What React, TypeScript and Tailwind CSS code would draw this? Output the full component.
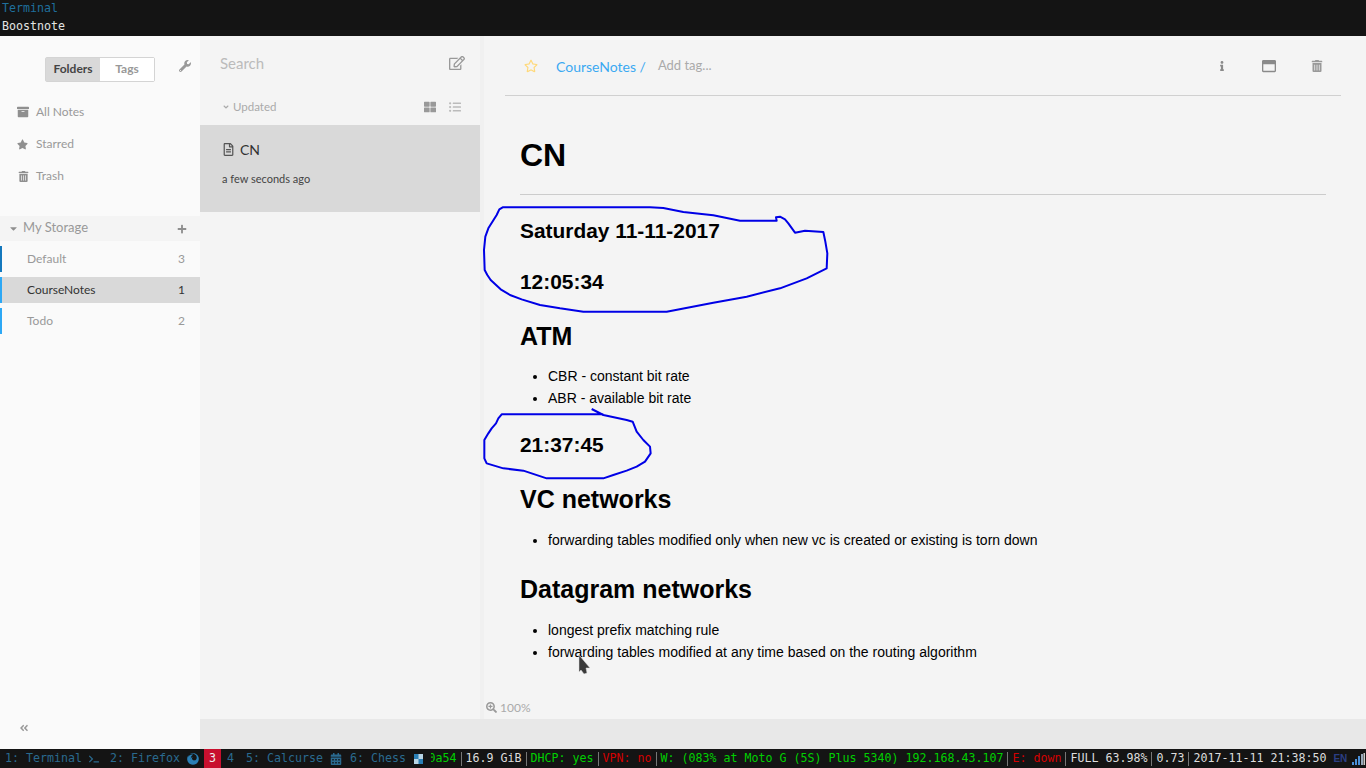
import {
  FaAngleDoubleLeft,
  FaAngleDown,
  FaArchive,
  FaCalendarAlt,
  FaCaretDown,
  FaFirefox,
  FaInfo,
  FaListUl,
  FaPlus,
  FaRegEdit,
  FaRegFileAlt,
  FaRegStar,
  FaRegWindowMaximize,
  FaSearchPlus,
  FaStar,
  FaTerminal,
  FaThLarge,
  FaTrashAlt,
  FaWrench,
} from "react-icons/fa";

const mono = "font-['DejaVu_Sans_Mono',monospace] text-[11.63px] leading-[19px] whitespace-pre";

function Sep() {
  return <span className="mx-[4px] h-[14px] w-px bg-[#777]" />;
}

function NavRow({ icon, label }: { icon: React.ReactNode; label: string }) {
  return (
    <div className="flex h-8 items-center pl-[17px] text-[12px] text-[#999]">
      <span className="flex w-[19px] items-center text-[#8f8f8f]">{icon}</span>
      <span className="-mt-[1px]">{label}</span>
    </div>
  );
}

function FolderRow({ name, count, bar, active }: { name: string; count: number; bar: string; active?: boolean }) {
  return (
    <div className={`flex h-[26px] items-center justify-between pr-[15px] text-[12px] ${active ? "bg-[#d9d9d9] text-[#333]" : "text-[#999]"}`}>
      <div className="flex h-full items-center">
        <span className={`h-full w-[2px] ${bar}`} />
        <span className="ml-[25px]">{name}</span>
      </div>
      <span>{count}</span>
    </div>
  );
}

function Sidebar() {
  return (
    <aside className="flex h-full w-[200px] shrink-0 flex-col bg-[#fafafa]">
      <div className="flex h-[60px] shrink-0 items-center pl-[45px] pt-[6px]">
        <div className="flex h-[25px] w-[110px] rounded-[2px] border border-[#d4d4d4] text-[12px]">
          <div className="flex w-[54px] items-center justify-center bg-[#d9d9d9] font-bold text-[#444]">Folders</div>
          <div className="flex flex-1 items-center justify-center bg-white font-bold text-[#999]">Tags</div>
        </div>
        <FaWrench className="ml-[24px] -mt-[6px] text-[12px] text-[#999]" />
      </div>
      <nav className="flex flex-col">
        <NavRow icon={<FaArchive className="text-[12px]" />} label="All Notes" />
        <NavRow icon={<FaStar className="text-[11px]" />} label="Starred" />
        <NavRow icon={<FaTrashAlt className="ml-[1px] text-[11px]" />} label="Trash" />
      </nav>
      <div className="mt-6 flex h-[25px] items-center justify-between bg-[#f4f4f4] pl-[8px] pr-[13px] text-[13px] text-[#999]">
        <div className="flex items-center">
          <FaCaretDown className="text-[11px] text-[#8f8f8f]" />
          <span className="ml-[4px] -mt-[2px]">My Storage</span>
        </div>
        <FaPlus className="text-[10px] text-[#8f8f8f]" />
      </div>
      <div className="mt-[5px] flex flex-col gap-[5px]">
        <FolderRow name="Default" count={3} bar="bg-[#1478bd]" />
        <FolderRow name="CourseNotes" count={1} bar="bg-[#2da8f5]" active />
        <FolderRow name="Todo" count={2} bar="bg-[#2da8f5]" />
      </div>
      <div className="mt-auto pb-[16px] pl-[19px]">
        <FaAngleDoubleLeft className="text-[10px] text-[#999]" />
      </div>
    </aside>
  );
}

function NoteList() {
  return (
    <section className="flex w-[280px] shrink-0 flex-col bg-[#f4f4f4]">
      <div className="flex h-[54px] items-center justify-between pl-5 pr-[15px]">
        <span className="text-[15px] text-[#bbb]">Search</span>
        <FaRegEdit className="text-[16px] text-[#999]" />
      </div>
      <div className="flex h-[35px] items-center justify-between pb-[2px] pl-[22px] pr-[19px] text-[11.5px] text-[#aaa]">
        <div className="flex items-center gap-[3px]">
          <FaAngleDown className="text-[8px]" />
          Updated
        </div>
        <div className="flex items-center gap-[13px]">
          <FaThLarge className="text-[12px] text-[#999]" />
          <FaListUl className="text-[12px] text-[#bbb]" />
        </div>
      </div>
      <div className="h-[87px] bg-[#d9d9d9] pl-[22px] pt-[14px]">
        <div className="flex h-[20px] items-center text-[14px] text-[#333]">
          <FaRegFileAlt className="mr-[5px] text-[13px] text-[#555]" />
          CN
        </div>
        <div className="mt-[12px] text-[11px] text-[#444]">a few seconds ago</div>
      </div>
    </section>
  );
}

function NoteHeader() {
  return (
    <header className="ml-[21px] mr-[25px] flex h-[60px] shrink-0 items-center justify-between border-b border-[#d0d0d0]">
      <div className="flex items-center pl-[19px]">
        <FaRegStar className="text-[14px] text-[#ffd97a]" />
        <span className="ml-[18px] pt-[2px] text-[14px] text-[#3ba9f2]">CourseNotes /</span>
        <span className="ml-[12px] text-[13px] text-[#aaa]">Add tag...</span>
      </div>
      <div className="flex items-center pr-[18px] text-[#8a8a8a]">
        <FaInfo className="text-[10px]" />
        <FaRegWindowMaximize className="ml-[35px] text-[14px]" />
        <FaTrashAlt className="ml-[35px] text-[12px] text-[#999]" />
      </div>
    </header>
  );
}

function NoteBody() {
  return (
    <article className="ml-[36px] mr-[40px] min-h-0 flex-1 font-['Liberation_Sans',Arial,sans-serif] text-black">
      <h1 className="mt-[39px] text-[32px] font-bold leading-[40px]">CN</h1>
      <hr className="mt-[19px] border-[#ccc]" />
      <h3 className="mt-6 text-[20.9px] font-bold leading-6">Saturday 11-11-2017</h3>
      <h3 className="mt-[27px] text-[20.9px] font-bold leading-6">12:05:34</h3>
      <h2 className="mt-[27px] text-[25px] font-bold leading-[30px]">ATM</h2>
      <ul className="mt-[14px] list-disc pl-7 text-[14px] leading-[22px]">
        <li>CBR - constant bit rate</li>
        <li>ABR - available bit rate</li>
      </ul>
      <h3 className="mt-6 text-[20.9px] font-bold leading-6">21:37:45</h3>
      <h2 className="mt-[27px] text-[25px] font-bold leading-[30px]">VC networks</h2>
      <ul className="mt-[15px] list-disc pl-7 text-[14px] leading-[22px]">
        <li>forwarding tables modified only when new vc is created or existing is torn down</li>
      </ul>
      <h2 className="mt-[23px] text-[25px] font-bold leading-[30px]">Datagram networks</h2>
      <ul className="mt-[15px] list-disc pl-7 text-[14px] leading-[22px]">
        <li>longest prefix matching rule</li>
        <li>forwarding tables modified at any time based on the routing algorithm</li>
      </ul>
    </article>
  );
}

function StatusBar() {
  return (
    <footer className={`flex h-[19px] shrink-0 items-center bg-[#141414] text-[#2a6a8f] ${mono}`}>
      <span className="ml-[5px]">1: Terminal</span>
      <FaTerminal className="ml-[7px] text-[10px]" />
      <span className="ml-[11px]">2: Firefox</span>
      <FaFirefox className="ml-[7px] text-[12px] text-[#2a7fb5]" />
      <span className="ml-[5px] flex h-full w-[17px] items-center justify-center bg-[#c8102e] text-[#eee]">3</span>
      <span className="ml-[6px]">4</span>
      <span className="ml-[12px]">5: Calcurse</span>
      <FaCalendarAlt className="ml-[7px] text-[12px]" />
      <span className="ml-[8px]">6: Chess</span>
      <svg className="ml-[7.5px]" width="9" height="10" viewBox="0 0 9 10">
        <rect width="9" height="10" fill="#2a7fb5" />
        <rect x="4.5" width="4.5" height="5" fill="#b8d4e4" />
        <rect y="5" width="4.5" height="5" fill="#b8d4e4" />
      </svg>
      <span className="ml-[8px] flex w-[26px] justify-end overflow-hidden text-[#00d000]">
        <span className="shrink-0">0a54</span>
      </span>
      <Sep />
      <span className="text-[#ddd]">16.9 GiB</span>
      <Sep />
      <span className="text-[#00d000]">DHCP: yes</span>
      <Sep />
      <span className="text-[#d40000]">VPN: no</span>
      <Sep />
      <span className="text-[#00d000]">W: (083% at Moto G (5S) Plus 5340) 192.168.43.107</span>
      <Sep />
      <span className="text-[#d40000]">E: down</span>
      <Sep />
      <span className="text-[#ddd]">FULL 63.98%</span>
      <Sep />
      <span className="text-[#ddd]">0.73</span>
      <Sep />
      <span className="text-[#ddd]">2017-11-11 21:38:50</span>
      <span className="ml-[7px] font-['Liberation_Sans',sans-serif] text-[10px] font-bold text-[#2b3f85]">EN</span>
      <svg className="ml-[5px]" width="13" height="12" viewBox="0 0 13 12">
        <rect x="0" y="9" width="2" height="3" fill="#4a90d9" />
        <rect x="3" y="6" width="2" height="6" fill="#4a90d9" />
        <rect x="6" y="3" width="2" height="9" fill="#4a90d9" />
        <rect x="9" y="1" width="2" height="11" fill="#9ab" />
        <rect x="11.5" y="0" width="1.5" height="12" fill="#ccc" />
      </svg>
    </footer>
  );
}

export default function App() {
  return (
    <div className="relative flex h-[768px] w-[1366px] flex-col overflow-hidden font-['Lato',sans-serif]">
      <div className={`h-9 shrink-0 bg-[#141414] pl-[2px] ${mono}`}>
        <div className="h-[18px] leading-[17px] text-[#1f6f9c]">Terminal</div>
        <div className="h-[18px] leading-[17px] text-[#e4e4e4]">Boostnote</div>
      </div>

      <main className="flex min-h-0 flex-1">
        <Sidebar />
        <div className="flex min-w-0 flex-1 flex-col bg-[#e8e8e8]">
          <div className="flex h-[683px] shrink-0">
            <NoteList />
            <div className="flex flex-1 flex-col border-l-4 border-[#f0f0f0] bg-[#f4f4f4]">
              <NoteHeader />
              <NoteBody />
              <div className="flex h-[23px] shrink-0 items-center gap-[3px] pl-[2px] text-[12px] text-[#aaa]">
                <FaSearchPlus className="text-[11px] text-[#999]" />
                100%
              </div>
            </div>
          </div>
        </div>
      </main>

      <StatusBar />

      {/* pen marks drawn over the note */}
      <svg className="pointer-events-none absolute left-[480px] top-[200px]" width="360" height="120" viewBox="0 0 1080 360" fill="none" stroke="#0000e6" strokeWidth="6" strokeLinejoin="round">
        <path d="M68 22 L510 22 L550 24 L610 36 L700 46 L780 62 L890 62 L888 52 L900 50 L915 58 L925 70 L945 98 L975 92 L1030 96 L1036 125 L1042 160 L1040 205 L980 235 L900 265 L800 290 L700 308 L560 335 L310 335 L240 325 L180 315 L125 298 L90 285 L62 268 L32 240 L22 225 L14 210 L12 150 L16 110 L25 85 L50 45 L58 28 Z" />
      </svg>
      <svg className="pointer-events-none absolute left-[480px] top-[400px]" width="200" height="90" viewBox="0 0 600 270" fill="none" stroke="#0000e6" strokeWidth="6" strokeLinejoin="round">
        <path d="M335 27 L370 45 L440 60 L458 65 L470 95 L490 120 L510 140 L512 160 L495 185 L470 200 L440 212 L400 225 L370 235 L200 235 L130 212 L70 205 L20 190 L13 175 L13 120 L25 100 L35 85 L48 70 L55 55 L65 43 L370 43" />
      </svg>
      <svg className="pointer-events-none absolute left-[578px] top-[654px]" width="14" height="22" viewBox="0 0 14 22">
        <path d="M1 1 L1 18 L3 16 L6 20 L9 19 L8 14 L12 14 Z" fill="#3a3a3a" stroke="#ddd" strokeWidth="0.5" />
      </svg>
    </div>
  );
}
